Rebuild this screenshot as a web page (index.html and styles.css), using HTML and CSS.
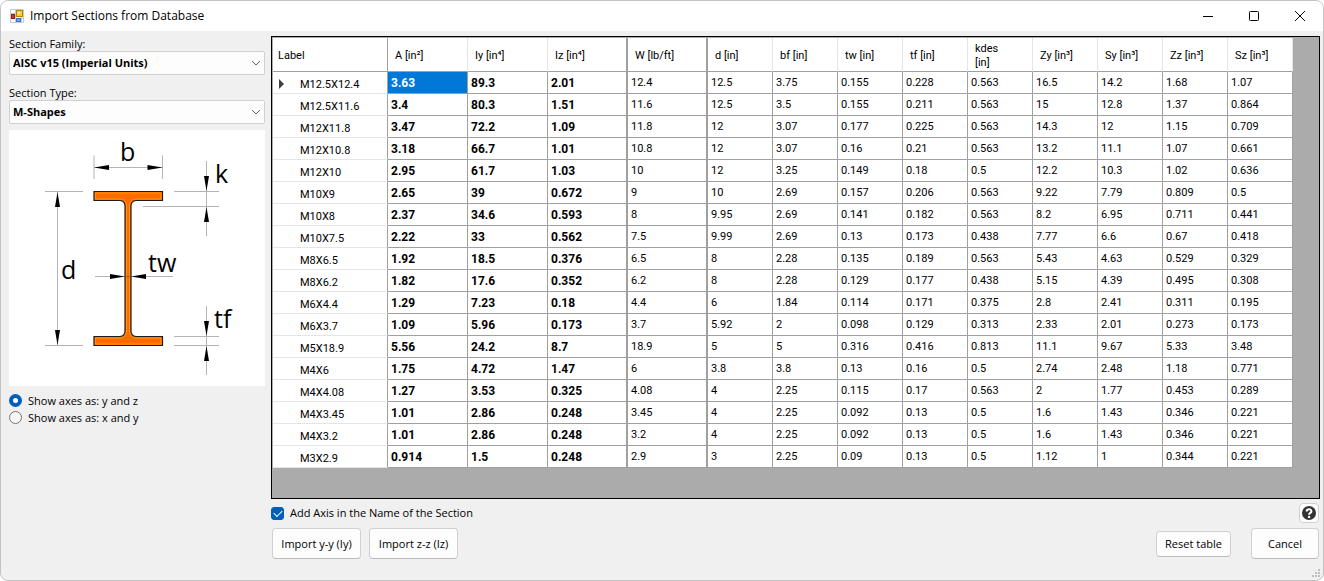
FILE: index.html
```
<!DOCTYPE html>
<html lang="en">
<head>
<meta charset="utf-8">
<title>Import Sections from Database</title>
<link rel="stylesheet" href="styles.css">
</head>
<body>
<div class="window">
<header class="titlebar">
  <svg class="app-icon" width="14" height="14" viewBox="0 0 14 14" aria-hidden="true">
    <path d="M.5.5h13v13H.5zM.5 4.5h6M.5 9.5h13M5.500.5v13M11.500 8v5" fill="#fff" stroke="#c9c9c9"/>
    <rect x="6.500" y="1.500" width="6" height="6" fill="#ffc83d" stroke="#b98208"/>
    <rect x="8" y="3" width="2" height="2" fill="#fff0a8"/>
    <rect x="1.500" y="5.500" width="3" height="4" fill="#d33e2a" stroke="#8b1f14"/>
    <rect x="6.500" y="9.500" width="4" height="3" fill="#6aa5f5" stroke="#3b73d3"/>
  </svg>
  <h1 class="title">Import Sections from Database</h1>
  <div class="caption-buttons">
    <button class="caption" type="button" aria-label="Minimize"><svg width="12" height="12" viewBox="0 0 12 12"><path d="M1 6.500h10" stroke="#000" fill="none"/></svg></button>
    <button class="caption" type="button" aria-label="Maximize"><svg width="12" height="12" viewBox="0 0 12 12"><rect x="1.500" y="1.500" width="9" height="9" rx="1" stroke="#000" fill="none"/></svg></button>
    <button class="caption" type="button" aria-label="Close"><svg width="12" height="12" viewBox="0 0 12 12"><path d="M1 1l10 10M11 1L1 11" stroke="#000" fill="none"/></svg></button>
  </div>
</header>
<main class="content">
  <section class="sidebar">
    <label class="field-label" for="family">Section Family:</label>
    <div class="combo">
      <select id="family"><option>AISC v15 (Imperial Units)</option></select>
      <svg class="chevron" width="10" height="6" viewBox="0 0 10 6" aria-hidden="true"><path d="M1 1l4 4 4-4" fill="none" stroke="#606060"/></svg>
    </div>
    <label class="field-label" for="type">Section Type:</label>
    <div class="combo">
      <select id="type"><option>M-Shapes</option></select>
      <svg class="chevron" width="10" height="6" viewBox="0 0 10 6" aria-hidden="true"><path d="M1 1l4 4 4-4" fill="none" stroke="#606060"/></svg>
    </div>
    <svg class="diagram" viewBox="0 0 256 256" role="img" aria-label="Section dimensions">
      <g stroke="#b4b4b4" fill="none">
        <path d="M85 25.500V49M153.500 25.500V49M85 37.500h69M36 61.500h38M36 215.500h38M48.500 62v153M165 61.500h45M134 76.500h76M197.500 31v75M86 146.500h78M165 206.500h45M165 215.500h45M197.500 176v69"/>
      </g>
      <path d="M85 61.500H153.500V70.500H127Q122 71 122 76V201Q122 206 127 206.500H153.500V215.500H85V206.500H111Q116 206 116 201V76Q116 71 111 70.500H85Z" fill="#ff6a00" stroke="#1c1c1c" stroke-width="1.200"/>
      <path d="M86.500 63H152V69H126Q120.500 70 120.500 76V201Q120.500 207 126 208H152V214H86.500V208H112Q117.500 207 117.500 201V76Q117.500 70 112 69H86.500Z" fill="#ff6a00" stroke="#ff9500"/>
      <path d="M116 146.500h6" stroke="#8c5a30"/>
      <path d="M85 37.500l15-2.500v5zM153.500 37.500l-15-2.500v5zM48.500 62l-2.500 15h5zM48.500 215l-2.500-15h5zM197.500 61l-2.500-15h5zM197.500 77l-2.500 15h5zM116 146.500l-15-2.500v5zM122 146.500l15-2.500v5zM197.500 206l-2.500-15h5zM197.500 216l-2.500 15h5z" fill="#000"/>
      <g class="dims"><text x="111" y="31">b</text><text x="206" y="53">k</text><text x="52" y="149">d</text><text x="139" y="142">tw</text><text x="205" y="198">tf</text></g>
    </svg>
    <label class="radio"><input type="radio" name="axes" checked>Show axes as: y and z</label>
    <label class="radio"><input type="radio" name="axes">Show axes as: x and y</label>
  </section>
  <section class="workspace">
    <div class="grid-view">
      <table class="sections">
        <colgroup><col class="c-label"><col class="c-wide" span="4"><col class="c-num" span="9"></colgroup>
        <thead>
          <tr><th>Label</th><th>A [in²]</th><th>Iy [in⁴]</th><th class="split">Iz [in⁴]</th><th class="split">W [lb/ft]</th><th>d [in]</th><th>bf [in]</th><th>tw [in]</th><th>tf [in]</th><th>kdes [in]</th><th>Zy [in³]</th><th>Sy [in³]</th><th>Zz [in³]</th><th>Sz [in³]</th></tr>
        </thead>
        <tbody>
          <tr class="current"><th>M12.5X12.4<td class="selected">3.63<td>89.3<td>2.01<td>12.4<td>12.5<td>3.75<td>0.155<td>0.228<td>0.563<td>16.5<td>14.2<td>1.68<td>1.07
          <tr><th>M12.5X11.6<td>3.4<td>80.3<td>1.51<td>11.6<td>12.5<td>3.5<td>0.155<td>0.211<td>0.563<td>15<td>12.8<td>1.37<td>0.864
          <tr><th>M12X11.8<td>3.47<td>72.2<td>1.09<td>11.8<td>12<td>3.07<td>0.177<td>0.225<td>0.563<td>14.3<td>12<td>1.15<td>0.709
          <tr><th>M12X10.8<td>3.18<td>66.7<td>1.01<td>10.8<td>12<td>3.07<td>0.16<td>0.21<td>0.563<td>13.2<td>11.1<td>1.07<td>0.661
          <tr><th>M12X10<td>2.95<td>61.7<td>1.03<td>10<td>12<td>3.25<td>0.149<td>0.18<td>0.5<td>12.2<td>10.3<td>1.02<td>0.636
          <tr><th>M10X9<td>2.65<td>39<td>0.672<td>9<td>10<td>2.69<td>0.157<td>0.206<td>0.563<td>9.22<td>7.79<td>0.809<td>0.5
          <tr><th>M10X8<td>2.37<td>34.6<td>0.593<td>8<td>9.95<td>2.69<td>0.141<td>0.182<td>0.563<td>8.2<td>6.95<td>0.711<td>0.441
          <tr><th>M10X7.5<td>2.22<td>33<td>0.562<td>7.5<td>9.99<td>2.69<td>0.13<td>0.173<td>0.438<td>7.77<td>6.6<td>0.67<td>0.418
          <tr><th>M8X6.5<td>1.92<td>18.5<td>0.376<td>6.5<td>8<td>2.28<td>0.135<td>0.189<td>0.563<td>5.43<td>4.63<td>0.529<td>0.329
          <tr><th>M8X6.2<td>1.82<td>17.6<td>0.352<td>6.2<td>8<td>2.28<td>0.129<td>0.177<td>0.438<td>5.15<td>4.39<td>0.495<td>0.308
          <tr><th>M6X4.4<td>1.29<td>7.23<td>0.18<td>4.4<td>6<td>1.84<td>0.114<td>0.171<td>0.375<td>2.8<td>2.41<td>0.311<td>0.195
          <tr><th>M6X3.7<td>1.09<td>5.96<td>0.173<td>3.7<td>5.92<td>2<td>0.098<td>0.129<td>0.313<td>2.33<td>2.01<td>0.273<td>0.173
          <tr><th>M5X18.9<td>5.56<td>24.2<td>8.7<td>18.9<td>5<td>5<td>0.316<td>0.416<td>0.813<td>11.1<td>9.67<td>5.33<td>3.48
          <tr><th>M4X6<td>1.75<td>4.72<td>1.47<td>6<td>3.8<td>3.8<td>0.13<td>0.16<td>0.5<td>2.74<td>2.48<td>1.18<td>0.771
          <tr><th>M4X4.08<td>1.27<td>3.53<td>0.325<td>4.08<td>4<td>2.25<td>0.115<td>0.17<td>0.563<td>2<td>1.77<td>0.453<td>0.289
          <tr><th>M4X3.45<td>1.01<td>2.86<td>0.248<td>3.45<td>4<td>2.25<td>0.092<td>0.13<td>0.5<td>1.6<td>1.43<td>0.346<td>0.221
          <tr><th>M4X3.2<td>1.01<td>2.86<td>0.248<td>3.2<td>4<td>2.25<td>0.092<td>0.13<td>0.5<td>1.6<td>1.43<td>0.346<td>0.221
          <tr><th>M3X2.9<td>0.914<td>1.5<td>0.248<td>2.9<td>3<td>2.25<td>0.09<td>0.13<td>0.5<td>1.12<td>1<td>0.344<td>0.221
        </tbody>
      </table>
    </div>
    <div class="options">
      <label class="check"><input type="checkbox" checked>Add Axis in the Name of the Section</label>
      <button class="help" type="button" aria-label="Help"><svg width="14" height="14" viewBox="0 0 14 14"><circle cx="7" cy="7" r="7" fill="#333"/><path d="M4.700 5.600C4.700 2.600 9.400 2.600 9.400 5.400 9.400 7 7.100 6.900 7.100 8.700" fill="none" stroke="#fff" stroke-width="2"/><circle cx="7.100" cy="10.900" r="1.200" fill="#fff"/></svg></button>
    </div>
    <div class="actions">
      <button class="btn import" type="button">Import y-y (Iy)</button>
      <button class="btn import" type="button">Import z-z (Iz)</button>
      <button class="btn reset" type="button">Reset table</button>
      <button class="btn cancel" type="button">Cancel</button>
    </div>
  </section>
</main>
<svg class="grip" width="10" height="10" viewBox="0 0 10 10" aria-hidden="true"><path d="M7 1h2M4 4h2M7 4h2M1 7h2M4 7h2M7 7h2" stroke="#bdbdbd" stroke-width="2"/></svg>
</div>
</body>
</html>
```
FILE: styles.css
```
* { box-sizing: border-box; }
body {
  margin: 0;
  background: #fff;
  color: #000;
  font: 11px/16px "Open Sans", "Noto Sans", sans-serif;
}
button, select { font: inherit; color: inherit; }
.window {
  position: relative;
  display: flex;
  flex-direction: column;
  min-height: 100vh;
  background: #f0f0f0;
  border: 1px solid #c3c3c3;
  border-radius: 8px;
  overflow: hidden;
}
.titlebar {
  display: flex;
  align-items: center;
  gap: 6px;
  height: 30px;
  padding-left: 9px;
  background: #fff;
}
.title { margin: 0; font-size: 12px; font-weight: 400; flex: 1; }
.caption-buttons { display: flex; }
.caption {
  display: grid;
  place-items: center;
  width: 46px;
  height: 30px;
  padding: 0;
  border: 0;
  background: none;
}
.content {
  flex: 1;
  display: grid;
  grid-template-columns: 256px minmax(0, 1fr);
  gap: 6px;
  padding: 5px 3px 21px 8px;
}
.sidebar { display: flex; flex-direction: column; }
.field-label { line-height: 15px; }
.combo { position: relative; margin-bottom: 10px; }
.combo select {
  appearance: none;
  display: block;
  width: 100%;
  height: 24px;
  padding: 0 24px 0 3px;
  border: 1px solid #d0d0d0;
  border-radius: 2px;
  background: #fdfdfd;
  font-weight: 700;
}
.chevron { position: absolute; right: 4px; top: 9px; pointer-events: none; }
.combo + .diagram { margin-top: -4px; }
.diagram { display: block; width: 100%; background: #fff; margin-bottom: 6px; }
.dims { font-size: 25px; }
.radio, .check { display: flex; align-items: center; gap: 6px; }
.radio { height: 17px; }
.radio input, .check input {
  appearance: none;
  flex: none;
  width: 13px;
  height: 13px;
  margin: 0;
  border: 1px solid #757575;
  border-radius: 50%;
  background: #f6f6f6;
}
.radio input:checked { border: 4px solid #005fb8; background: #fff; }
.check input { border-radius: 3px; }
.check input:checked {
  display: grid;
  place-items: center;
  border-color: #005fb8;
  background: #005fb8;
}
.check input:checked::before {
  content: "";
  width: 7px;
  height: 4px;
  margin-bottom: 2px;
  border: solid #fff;
  border-width: 0 0 1px 1px;
  transform: rotate(-45deg);
}
.workspace { display: flex; flex-direction: column; min-width: 0; }
.grid-view {
  flex: 1;
  border: 1px solid #000;
  background: #ababab;
  padding: 1px;
  overflow: hidden;
}
.sections {
  table-layout: fixed;
  width: 1020px;
  border-collapse: separate;
  border-spacing: 0;
  background: #fff;
  font: 11px/14px Roboto, sans-serif;
}
.c-label { width: 115px; }
.c-wide { width: 80px; }
.c-num { width: 65px; }
.sections th, .sections td {
  height: 22px;
  padding: 1px 3px 0;
  border: solid #a0a0a0;
  border-width: 0 1px 1px 0;
  text-align: left;
  font-weight: 400;
}
.sections thead th { height: 34px; padding: 2px 7px 0; border-right-color: #e5e5e5; }
.sections thead th:first-child { padding-left: 5px; border-right-color: #a0a0a0; }
.sections thead th:nth-child(10) { padding-right: 20px; }
.sections tbody th {
  position: relative;
  padding: 5px 0 0 27px;
  border-bottom-color: #e5e5e5;
}
.sections tbody td:nth-child(-n+4) { font-size: 12px; font-weight: 700; }
.sections thead .split { border-right: 2px solid #a0a0a0; }
.sections td:nth-child(4), .sections td:nth-child(5) { border-right-width: 2px; }
.sections .selected { background: #0078d7; color: #fff; }
.current th::before {
  content: "";
  position: absolute;
  left: 6px;
  top: 7px;
  border: solid transparent;
  border-width: 5px 0 5px 5px;
  border-left-color: #404040;
}
.options {
  display: flex;
  align-items: center;
  justify-content: space-between;
  margin: 4px 0 5px;
  padding-right: 1px;
}
.help {
  display: grid;
  place-items: center;
  width: 20px;
  height: 20px;
  padding: 0;
  border: 1px solid #d0d0d0;
  border-radius: 4px;
  background: #fdfdfd;
}
.actions { display: flex; align-items: center; gap: 8px; padding: 0 1px; }
.btn {
  height: 31px;
  padding: 0;
  border: 1px solid #d0d0d0;
  border-bottom-color: #bcbcbc;
  border-radius: 4px;
  background: #fdfdfd;
}
.import { width: 89px; }
.reset { width: 75px; height: 26px; margin-left: auto; }
.cancel { width: 68px; margin-left: 12px; }
.grip { position: absolute; right: 2px; bottom: 1px; }
```
